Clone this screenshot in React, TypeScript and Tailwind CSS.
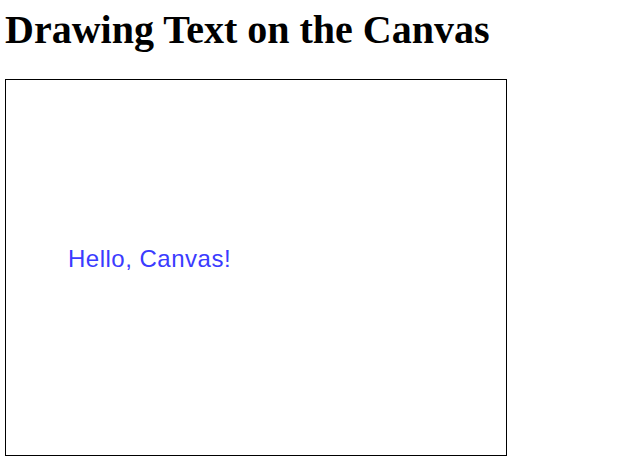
export default function App() {
  return (
    <div className="min-h-[462px] bg-white pl-[5px] pt-[7px]">
      <h1 className="m-0 font-['Liberation_Serif',serif] text-[40px] font-bold leading-[46px] text-black">
        Drawing Text on the Canvas
      </h1>

      {/* canvas frame */}
      <div className="mt-[26px] h-[377px] w-[502px] border border-black bg-white">
        <p className="m-0 pl-[62px] pt-[165px] font-['Liberation_Sans',Arial,sans-serif] text-[24px] leading-[28px] tracking-[0.5px] text-[#3b3bff]">
          Hello, Canvas!
        </p>
      </div>
    </div>
  );
}
